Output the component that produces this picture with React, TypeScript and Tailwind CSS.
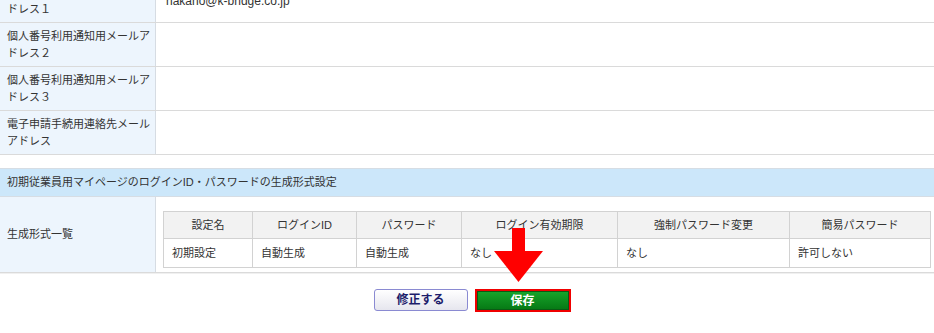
import React from "react";

const font = {
  fontFamily: '"Liberation Sans", "Noto Sans CJK JP", sans-serif',
};

function Row({ label, value }: { label: React.ReactNode; value?: React.ReactNode }) {
  return (
    <div className="flex border-b border-[#dadada]">
      <div className="w-[156px] shrink-0 bg-[#edf5fd] border-r border-[#d6dce3] pl-[7px] pr-[5px] pt-[5px] pb-[4px] leading-[17px] text-[#333]">
        {label}
      </div>
      <div className="flex-1 flex items-center pl-[10px] text-[#333]">{value}</div>
    </div>
  );
}

export default function App() {
  const heads = [
    { t: "設定名", w: "w-[89px]" },
    { t: "ログインID", w: "w-[104px]" },
    { t: "パスワード", w: "w-[105px]" },
    { t: "ログイン有効期限", w: "w-[156px]" },
    { t: "強制パスワード変更", w: "w-[172px]" },
    { t: "簡易パスワード", w: "w-[141px]" },
  ];
  const cells = ["初期設定", "自動生成", "自動生成", "なし", "なし", "許可しない"];
  return (
    <div className="relative w-[934px] h-[333px] overflow-hidden bg-white text-[11px]" style={font}>
      <div className="w-[944px] -mt-[22px]">
        <div className="border-t border-[#dadada]" />
        <Row
          label="個人番号利用通知用メールアドレス１"
          value={<span className="text-[12px]">nakano@k-bridge.co.jp</span>}
        />
        <Row label="個人番号利用通知用メールアドレス２" />
        <Row label="個人番号利用通知用メールアドレス３" />
        <Row label="電子申請手続用連絡先メールアドレス" />

        <div className="mt-[13px] border-t border-b border-[#d6dde4] bg-[#cce7fa] h-[29px] flex items-center pl-[7px] text-[#333]">
          初期従業員用マイページのログインID・パスワードの生成形式設定
        </div>
        <div className="flex border-b border-[#dadada]">
          <div className="w-[156px] shrink-0 bg-[#edf5fd] border-r border-[#d6dce3] pl-[7px] flex items-center text-[#333]">
            生成形式一覧
          </div>
          <div className="flex-1 pl-[7px] pt-[14px] pb-[4px]">
            <table className="border-collapse text-[#333]">
              <thead>
                <tr>
                  {heads.map((h) => (
                    <th
                      key={h.t}
                      className={`${h.w} h-[27px] border border-[#d2d2d2] bg-[#f2f2f2] font-normal text-center p-0`}
                    >
                      {h.t}
                    </th>
                  ))}
                </tr>
              </thead>
              <tbody>
                <tr>
                  {cells.map((c, i) => (
                    <td key={i} className="h-[29px] border border-[#d2d2d2] pl-[8px] text-left">
                      {c}
                    </td>
                  ))}
                </tr>
              </tbody>
            </table>
          </div>
        </div>
        <div className="border-t border-[#f0f0f0]" />

        <div className="mt-[15px] flex justify-center gap-[7px]">
          <button className="w-[94px] h-[22px] rounded-[3px] border border-[#8a8ad2] bg-gradient-to-b from-white to-[#e6e6ee] text-[#1d1d6b] font-bold text-[12px]">
            修正する
          </button>
          <button className="w-[96px] h-[23px] border-2 border-[#f00000] bg-gradient-to-b from-[#17a62b] to-[#067814] text-white font-bold text-[12px] shadow-[inset_0_0_0_1px_#0b5a14]">
            保存
          </button>
        </div>
      </div>

      <svg className="absolute left-[494px] top-[228px]" width="49" height="55" viewBox="0 0 49 55">
        <rect x="18" y="0" width="13" height="24" fill="#ff0000" />
        <polygon points="0,23 49,23 24.5,54" fill="#ff0000" />
      </svg>
    </div>
  );
}
